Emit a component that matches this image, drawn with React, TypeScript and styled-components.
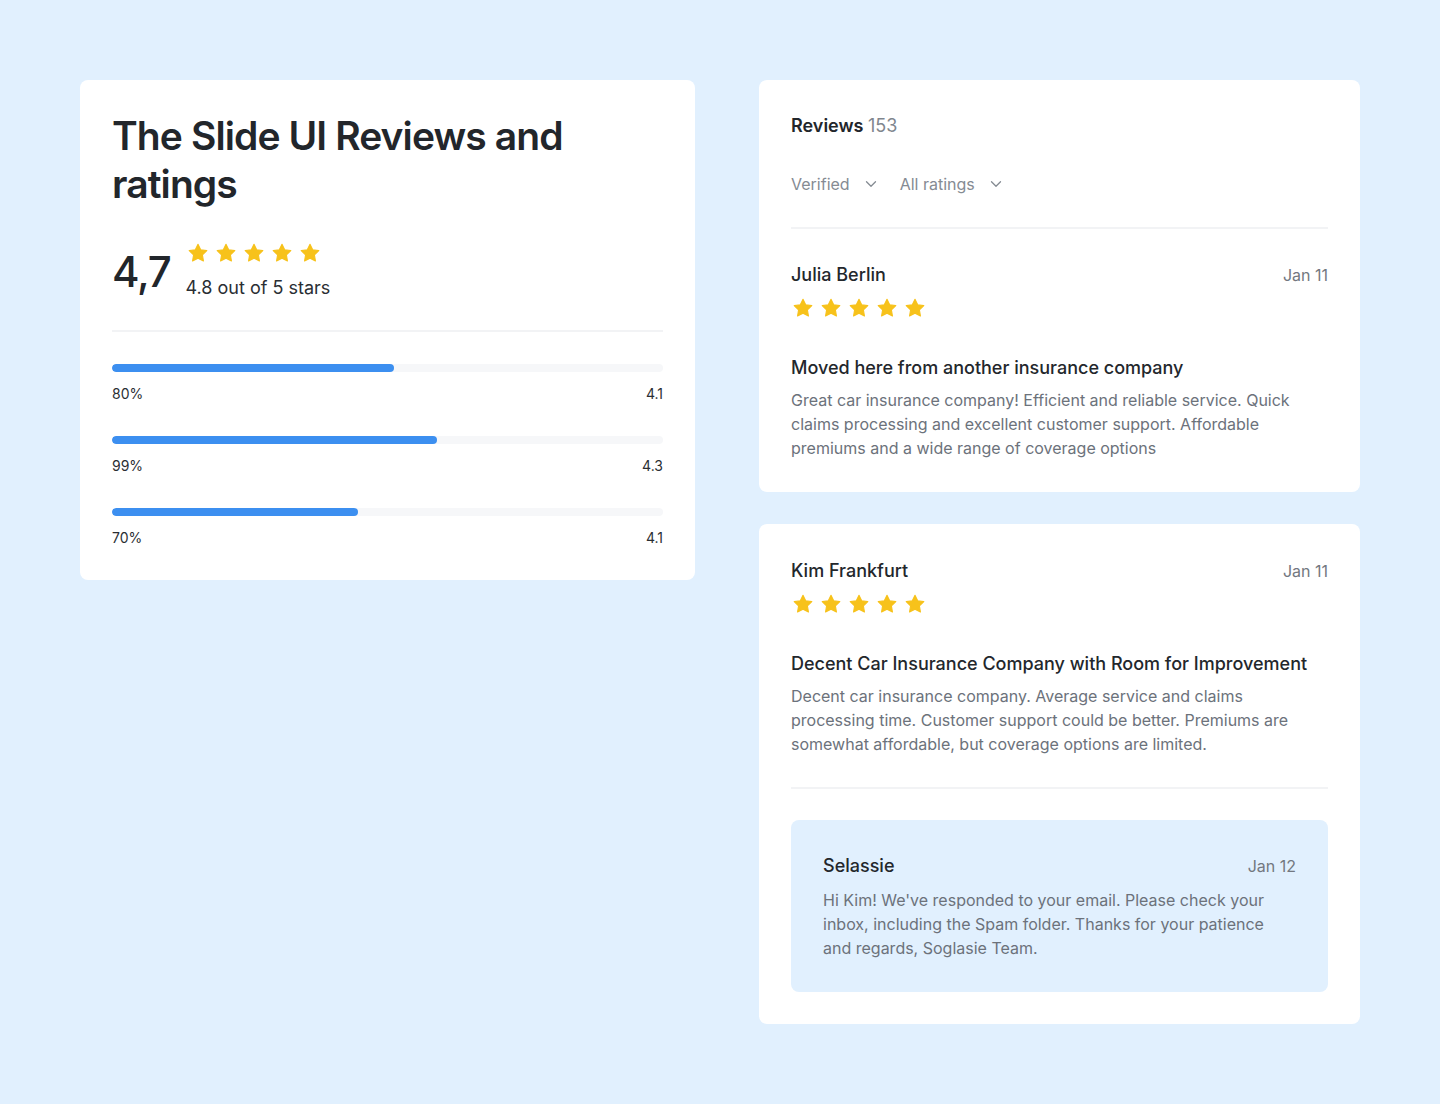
import React from 'react'
import styled, { createGlobalStyle } from 'styled-components'
import { ChevronDown } from 'lucide-react'

const GlobalStyle = createGlobalStyle`
  body {
    margin: 0;
    background: #e1f0fe;
    font-family: Inter, 'Noto Sans', sans-serif;
    color: #23272c;
    -webkit-font-smoothing: antialiased;
  }
`

const Page = styled.div`
  display: flex;
  align-items: flex-start;
  gap: 64px;
  padding: 80px;
  min-height: 1104px;
  box-sizing: border-box;
`

const Card = styled.section<{ $width: number; $top?: number }>`
  width: ${(p) => p.$width}px;
  box-sizing: border-box;
  background: #fff;
  border-radius: 8px;
  padding: 32px;
  padding-top: ${(p) => p.$top ?? 32}px;
`

const Column = styled.div`
  display: flex;
  flex-direction: column;
  gap: 32px;
`

const Title = styled.h1`
  margin: 0;
  font-size: 39px;
  line-height: 48px;
  font-weight: 600;
  letter-spacing: -0.9px;
  color: #22262b;
  width: 480px;
`

const ScoreRow = styled.div`
  display: flex;
  align-items: center;
  gap: 15px;
  margin-top: 33px;
`

const Score = styled.div`
  font-size: 42px;
  line-height: 48px;
  font-weight: 500;
  letter-spacing: -1.2px;
  color: #22262b;
`

const ScoreInfo = styled.div`
  display: flex;
  flex-direction: column;
  gap: 9px;
`

const ScoreText = styled.div`
  font-size: 18px;
  line-height: 28px;
  color: #2a2e33;
`

const Stars = styled.div`
  display: flex;
  align-items: center;
  gap: 4px;
  height: 24px;
`

const Divider = styled.hr<{ $m?: string }>`
  border: 0;
  height: 2px;
  background: #f2f3f5;
  margin: ${(p) => p.$m || '0'};
`

const BarList = styled.div`
  display: flex;
  flex-direction: column;
  gap: 32px;
`

const BarItem = styled.div`
  display: flex;
  flex-direction: column;
  gap: 12px;
`

const Track = styled.div`
  height: 8px;
  border-radius: 4px;
  background: #f6f7f9;
  overflow: hidden;
`

const Fill = styled.div`
  height: 100%;
  border-radius: 4px;
  background: #3c8ff0;
`

const BarLabels = styled.div`
  display: flex;
  justify-content: space-between;
  font-size: 14px;
  line-height: 20px;
  color: #2a2e33;
`

const Header = styled.div`
  font-size: 18px;
  line-height: 28px;
  font-weight: 600;
  color: #22262b;
`

const Count = styled.span`
  font-weight: 400;
  color: #80868e;
`

const Filters = styled.div`
  display: flex;
  gap: 20px;
  margin-top: 32px;
`

const Filter = styled.div`
  display: flex;
  align-items: center;
  gap: 12px;
  font-size: 16px;
  line-height: 24px;
  color: #858b93;
`

const ReviewHead = styled.div`
  display: flex;
  justify-content: space-between;
  align-items: center;
`

const Name = styled.div`
  font-size: 18px;
  line-height: 28px;
  font-weight: 500;
  color: #23272c;
`

const DateText = styled.div`
  font-size: 16px;
  line-height: 24px;
  color: #737880;
`

const ReviewStars = styled(Stars)`
  margin-top: 7px;
`

const ReviewTitle = styled.h3`
  margin: 34px 0 0;
  font-size: 18px;
  line-height: 28px;
  font-weight: 500;
  color: #23272c;
`

const Body = styled.p`
  margin: 6px 0 0;
  font-size: 16px;
  line-height: 24px;
  color: #6c727b;
`

const Reply = styled.div`
  background: #e1f0fe;
  border-radius: 8px;
  padding: 32px;
`

const ReplyBody = styled(Body)`
  margin-top: 8px;
`

// five-point star, about 18px across inside a 24px box
const Star = () => (
  <svg width="24" height="24" viewBox="0 0 24 24">
    <path
      d="M12 3.2l2.7 5.6 6.1.85-4.4 4.3 1.05 6.1L12 17.2l-5.45 2.85 1.05-6.1-4.4-4.3 6.1-.85z"
      fill="#f7c21b"
      stroke="#f7c21b"
      strokeWidth="1.1"
      strokeLinejoin="round"
    />
  </svg>
)

const FiveStars = ({ review }: { review?: boolean }) => {
  const Wrap = review ? ReviewStars : Stars
  return (
    <Wrap>
      {[0, 1, 2, 3, 4].map((i) => (
        <Star key={i} />
      ))}
    </Wrap>
  )
}

const bars = [
  { label: '80%', value: '4.1', fill: 51.1 },
  { label: '99%', value: '4.3', fill: 58.9 },
  { label: '70%', value: '4.1', fill: 44.6 },
]

const App: React.FC = () => {
  return (
    <>
      <GlobalStyle />
      <Page>
        <Card $width={615}>
          <Title>The Slide UI Reviews and ratings</Title>
          <ScoreRow>
            <Score>4,7</Score>
            <ScoreInfo>
              <FiveStars />
              <ScoreText>4.8 out of 5 stars</ScoreText>
            </ScoreInfo>
          </ScoreRow>
          <Divider $m="28px 0 32px" />
          <BarList>
            {bars.map((b) => (
              <BarItem key={b.label}>
                <Track>
                  <Fill style={{ width: `${b.fill}%` }} />
                </Track>
                <BarLabels>
                  <span>{b.label}</span>
                  <span>{b.value}</span>
                </BarLabels>
              </BarItem>
            ))}
          </BarList>
        </Card>

        <Column>
          <Card $width={601}>
            <Header>
              Reviews <Count>153</Count>
            </Header>
            <Filters>
              <Filter>
                Verified <ChevronDown size={18} strokeWidth={1.75} />
              </Filter>
              <Filter>
                All ratings <ChevronDown size={18} strokeWidth={1.75} />
              </Filter>
            </Filters>
            <Divider $m="31px 0 32px" />
            <ReviewHead>
              <Name>Julia Berlin</Name>
              <DateText>Jan 11</DateText>
            </ReviewHead>
            <FiveStars review />
            <ReviewTitle>Moved here from another insurance company</ReviewTitle>
            <Body>
              Great car insurance company! Efficient and reliable service. Quick claims
              processing and excellent customer support. Affordable premiums and a wide
              range of coverage options
            </Body>
          </Card>

          <Card $width={601} $top={33}>
            <ReviewHead>
              <Name>Kim Frankfurt</Name>
              <DateText>Jan 11</DateText>
            </ReviewHead>
            <FiveStars review />
            <ReviewTitle>Decent Car Insurance Company with Room for Improvement</ReviewTitle>
            <Body>
              Decent car insurance company. Average service and claims processing time.
              Customer support could be better. Premiums are somewhat affordable, but
              coverage options are limited.
            </Body>
            <Divider $m="31px 0 31px" />
            <Reply>
              <ReviewHead>
                <Name>Selassie</Name>
                <DateText>Jan 12</DateText>
              </ReviewHead>
              <ReplyBody>
                Hi Kim! We've responded to your email. Please check your inbox, including
                the Spam folder. Thanks for your patience and regards, Soglasie Team.
              </ReplyBody>
            </Reply>
          </Card>
        </Column>
      </Page>
    </>
  )
}

export default App
